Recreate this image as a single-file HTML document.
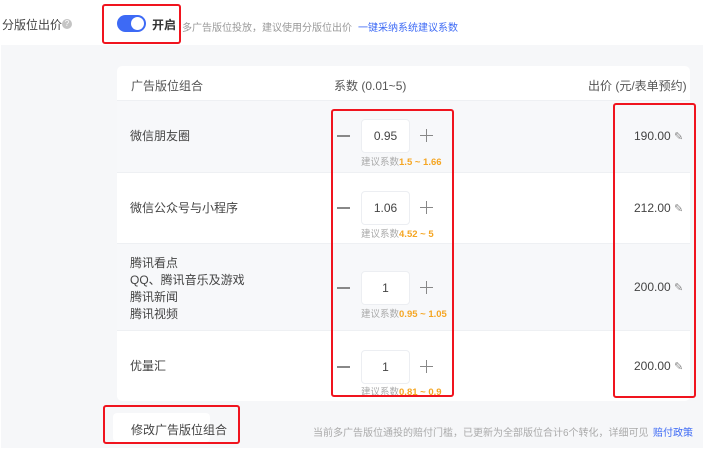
<!DOCTYPE html>
<html><head><meta charset="utf-8"><style>
*{margin:0;padding:0;box-sizing:border-box}
body{width:723px;height:458px;background:#fff;font-family:"Liberation Sans","Noto Sans CJK SC",sans-serif;color:#333;position:relative;overflow:hidden}
.a{position:absolute;white-space:nowrap}
.red{position:absolute;border:2px solid #f0141e;border-radius:3px}
.row{position:absolute;left:117px;width:573px}
.inp{position:absolute;width:49px;height:34px;background:#fff;border:1px solid #eceef2;border-radius:4px;text-align:center;line-height:32px;font-size:12px;color:#444}
.mn{position:absolute;width:13px;height:1.5px;background:#888}
.pl{position:absolute;width:13px;height:13px}
.pl:before{content:"";position:absolute;left:0;top:5.8px;width:13px;height:1.5px;background:#888}
.pl:after{content:"";position:absolute;top:0;left:5.8px;height:13px;width:1.5px;background:#888}
.sg{position:absolute;font-size:9.5px;color:#aaa;white-space:nowrap}
.sg b{color:#f5a623;font-weight:bold}
.pr{position:absolute;font-size:12px;color:#444;white-space:nowrap}
.nm{position:absolute;left:130px;font-size:12px;color:#444;line-height:17px}
</style></head><body>
<div class="a" style="left:2px;top:16px;font-size:12px;color:#444">分版位出价</div>
<div class="a" style="left:62px;top:19px;width:10px;height:10px;border-radius:50%;background:#c4c4c4;color:#fff;font-size:8px;text-align:center;line-height:10px">?</div>
<div class="a" style="left:117px;top:15px;width:29px;height:17px;border-radius:9px;background:#3d6af5"></div>
<div class="a" style="left:131px;top:17px;width:13px;height:13px;border-radius:50%;background:#fff"></div>
<div class="a" style="left:152px;top:16px;font-size:12px;color:#333;font-weight:bold">开启</div>
<div class="a" style="left:182px;top:19px;font-size:10px;color:#999">多广告版位投放，建议使用分版位出价</div>
<div class="a" style="left:358px;top:19px;font-size:10px;color:#3d6af5">一键采纳系统建议系数</div>
<div class="red" style="left:102px;top:4px;width:79px;height:40px"></div>

<div class="a" style="left:1px;top:45px;width:702px;height:403px;background:#f6f7f9"></div>
<div class="a" style="left:117px;top:66px;width:573px;height:335px;background:#fff;border-radius:5px"></div>
<div class="a" style="left:131px;top:77px;font-size:12px;color:#555">广告版位组合</div>
<div class="a" style="left:334px;top:77px;font-size:12px;color:#555">系数 (0.01~5)</div>
<div class="a" style="left:588px;top:77px;font-size:12px;color:#555">出价 (元/表单预约)</div>

<div class="row" style="top:100px;height:72px;background:#f7f8fa;border-top:1px solid #eef0f3"></div>
<div class="row" style="top:172px;height:71px;background:#fff;border-top:1px solid #eef0f3"></div>
<div class="row" style="top:243px;height:87px;background:#f7f8fa;border-top:1px solid #eef0f3"></div>
<div class="row" style="top:330px;height:70px;background:#fff;border-top:1px solid #eef0f3;border-radius:0 0 5px 5px"></div>

<div class="nm" style="top:128px">微信朋友圈</div>
<div class="nm" style="top:200px">微信公众号与小程序</div>
<div class="nm" style="top:255px">腾讯看点<br>QQ、腾讯音乐及游戏<br>腾讯新闻<br>腾讯视频</div>
<div class="nm" style="top:358px">优量汇</div>

<div class="mn" style="left:337px;top:135px"></div><div class="inp" style="left:361px;top:119px">0.95</div><div class="pl" style="left:420px;top:129px"></div>
<div class="sg" style="left:361px;top:154px">建议系数<b>1.5 ~ 1.66</b></div>
<div class="mn" style="left:337px;top:207px"></div><div class="inp" style="left:361px;top:191px">1.06</div><div class="pl" style="left:420px;top:201px"></div>
<div class="sg" style="left:361px;top:226px">建议系数<b>4.52 ~ 5</b></div>
<div class="mn" style="left:337px;top:287px"></div><div class="inp" style="left:361px;top:271px">1</div><div class="pl" style="left:420px;top:281px"></div>
<div class="sg" style="left:361px;top:306px">建议系数<b>0.95 ~ 1.05</b></div>
<div class="mn" style="left:337px;top:366px"></div><div class="inp" style="left:361px;top:350px">1</div><div class="pl" style="left:420px;top:360px"></div>
<div class="sg" style="left:361px;top:384px">建议系数<b>0.81 ~ 0.9</b></div>

<div class="pr" style="left:634px;top:129px">190.00 <span style="color:#888;font-size:11px">✎</span></div>
<div class="pr" style="left:634px;top:201px">212.00 <span style="color:#888;font-size:11px">✎</span></div>
<div class="pr" style="left:634px;top:280px">200.00 <span style="color:#888;font-size:11px">✎</span></div>
<div class="pr" style="left:634px;top:359px">200.00 <span style="color:#888;font-size:11px">✎</span></div>

<div class="red" style="left:331px;top:109px;width:123px;height:288px"></div>
<div class="red" style="left:613px;top:103px;width:83px;height:295px"></div>

<div class="a" style="left:113px;top:413px;width:97px;height:29px;background:#fff;border-radius:4px"></div>
<div class="a" style="left:131px;top:421px;font-size:12px;color:#444">修改广告版位组合</div>
<div class="red" style="left:103px;top:405px;width:137px;height:39px"></div>
<div class="a" style="left:313px;top:424px;font-size:10px;color:#aaa">当前多广告版位通投的赔付门槛，已更新为全部版位合计6个转化，详细可见</div>
<div class="a" style="left:653px;top:424px;font-size:10px;color:#3d6af5">赔付政策</div>
</body></html>
